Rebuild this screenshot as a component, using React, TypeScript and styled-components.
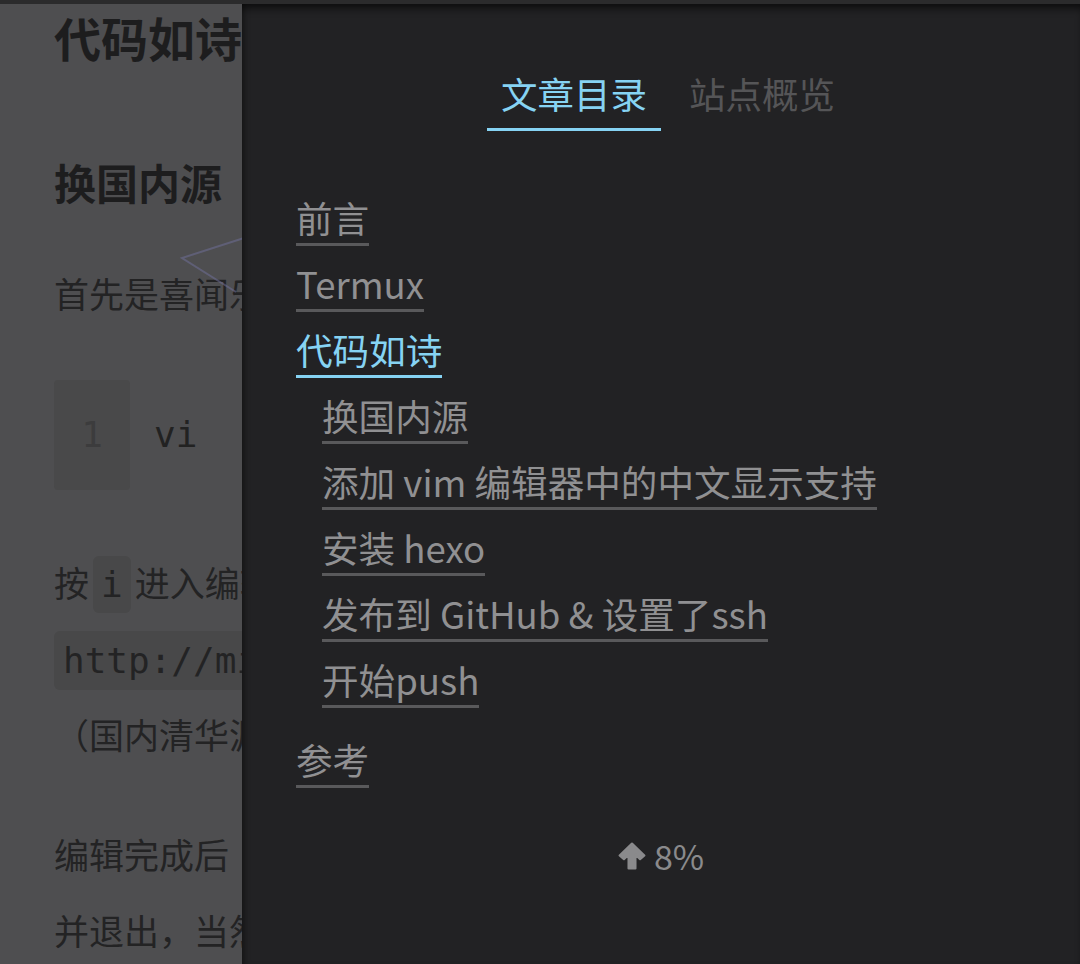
import React from "react";
import styled, { createGlobalStyle } from "styled-components";

const GlobalStyle = createGlobalStyle`
  html, body {
    margin: 0;
    padding: 0;
    background: #4e4e50;
    overflow: hidden;
  }
  body {
    font-family: "Noto Sans CJK SC", "Noto Sans", sans-serif;
  }
`;

type TocItem = {
  title: string;
  active?: boolean;
  children?: TocItem[];
};

const toc: TocItem[] = [
  { title: "前言" },
  { title: "Termux" },
  {
    title: "代码如诗",
    active: true,
    children: [
      { title: "换国内源" },
      { title: "添加 vim 编辑器中的中文显示支持" },
      { title: "安装 hexo" },
      { title: "发布到 GitHub & 设置了ssh" },
      { title: "开始push" },
    ],
  },
  { title: "参考" },
];

const Screen = styled.div`
  position: relative;
  width: 1080px;
  height: 964px;
  overflow: hidden;
  background: #4e4e50;
`;

const TopBar = styled.div`
  height: 4px;
  background: #2b2b2c;
`;

// the part of the post that the sidebar leaves visible
const Article = styled.article`
  width: 242px;
  overflow: hidden;
  box-sizing: border-box;
  padding-left: 54px;
  color: #232324;
  white-space: nowrap;
`;

const Heading = styled.h2<{ $size: number; $top: number }>`
  margin: ${(p) => p.$top}px 0 0;
  font-size: ${(p) => p.$size}px;
  line-height: 1.2;
  font-weight: 700;
  color: #1d1d1e;
`;

const Para = styled.p<{ $top: number }>`
  margin: ${(p) => p.$top}px 0 0;
  font-size: 35px;
  line-height: 76px;
`;

const InlineCode = styled.code<{ $block?: boolean }>`
  font-family: "DejaVu Sans Mono", "Liberation Mono", monospace;
  font-size: 36px;
  line-height: 1;
  background: #484849;
  border-radius: 6px;
  padding: ${(p) => (p.$block ? "9px 9px" : "8px 8px")};
  margin: ${(p) => (p.$block ? "0" : "0 4px")};
`;

const Spacer = styled.span`
  display: inline-block;
  width: 16px;
`;

const CodeBlock = styled.div`
  display: flex;
  margin-top: 49px;
  height: 110px;
  font-family: "DejaVu Sans Mono", "Liberation Mono", monospace;
  font-size: 36px;
`;

const Gutter = styled.div`
  flex: none;
  width: 76px;
  display: flex;
  align-items: center;
  justify-content: center;
  background: #49494a;
  border-radius: 4px;
  color: #3c3c3d;
`;

const CodeLine = styled.div`
  display: flex;
  align-items: center;
  padding-left: 24px;
  white-space: pre;
  color: #222;
`;

const Scribble = styled.svg`
  position: absolute;
  left: 170px;
  top: 230px;
  width: 90px;
  height: 70px;
`;

const Sidebar = styled.aside`
  position: absolute;
  top: 4px;
  right: 0;
  bottom: 0;
  width: 838px;
  background: #222224;
  box-shadow: inset 0 8px 8px -4px rgba(0, 0, 0, 0.65),
    inset 6px 0 6px -4px rgba(0, 0, 0, 0.35);
  display: flex;
  flex-direction: column;
  padding: 66px 54px 0;
  box-sizing: border-box;
`;

const Tabs = styled.div`
  display: flex;
  justify-content: center;
  gap: 14px;
  padding-left: 14px;
`;

const Tab = styled.div<{ $active?: boolean }>`
  padding: 0 14px 10px;
  font-size: 36.5px;
  line-height: 48px;
  color: ${(p) => (p.$active ? "#86d3f3" : "#555557")};
  border-bottom: 3px solid ${(p) => (p.$active ? "#86d3f3" : "transparent")};
`;

const List = styled.ul<{ $nested?: boolean }>`
  list-style: none;
  margin: ${(p) => (p.$nested ? "0 0 14px" : "65px 0 0")};
  padding: 0 0 0 ${(p) => (p.$nested ? 26 : 0)}px;
`;

const Item = styled.li`
  margin: 0;
  line-height: 0;
`;

const Link = styled.a<{ $active?: boolean }>`
  display: inline-block;
  margin-bottom: 16px;
  padding-bottom: 3px;
  font-size: 36.6px;
  line-height: 44px;
  color: ${(p) => (p.$active ? "#86d3f3" : "#909092")};
  border-bottom: 3px solid ${(p) => (p.$active ? "#86d3f3" : "#59595b")};
  text-decoration: none;
  white-space: nowrap;
`;

const Progress = styled.div`
  display: flex;
  align-items: center;
  justify-content: center;
  gap: 8px;
  margin-top: 30px;
  font-size: 34px;
  line-height: 44px;
  color: #8a8a8c;
`;

const ArrowIcon = styled.svg`
  width: 28px;
  height: 28px;
  margin-top: -1px;
`;

const TocList = ({ items, nested }: { items: TocItem[]; nested?: boolean }) => (
  <List $nested={nested}>
    {items.map((item) => (
      <Item key={item.title}>
        <Link $active={item.active}>{item.title}</Link>
        {item.children && <TocList items={item.children} nested />}
      </Item>
    ))}
  </List>
);

export default function App() {
  return (
    <Screen>
      <GlobalStyle />
      <TopBar />
      <Article>
        <Heading $size={47} $top={5}>代码如诗</Heading>
        <Heading $size={42} $top={92}>换国内源</Heading>
        <Para $top={47}>首先是喜闻乐见的换源环节</Para>
        <CodeBlock>
          <Gutter>1</Gutter>
          <CodeLine>{"vi    $PREFIX/etc/apt/sources.list"}</CodeLine>
        </CodeBlock>
        <Para $top={54}>
          按<InlineCode>i</InlineCode>进入编辑模式
          <br />
          <InlineCode $block>http://mirrors.tuna.tsinghua.edu.cn</InlineCode>
          <br />
          （国内清华源）
        </Para>
        <Para $top={44}>
          编辑完成后<Spacer />按 Esc 输入 :wq 保存
          <br />
          并退出，当然也可以用 nano
        </Para>
      </Article>
      <Scribble viewBox="0 0 90 70">
        <polyline
          points="74,8 12,28 66,62"
          fill="none"
          stroke="rgba(110,110,150,0.55)"
          strokeWidth="2"
        />
      </Scribble>
      <Sidebar>
        <Tabs>
          <Tab $active>文章目录</Tab>
          <Tab>站点概览</Tab>
        </Tabs>
        <TocList items={toc} />
        <Progress>
          <ArrowIcon viewBox="0 0 26 26">
            <path
              d="M13 1.5 L24.5 12.5 L20.5 16 L16.2 11.8 V24.5 H9.8 V11.8 L5.5 16 L1.5 12.5 Z"
              fill="currentColor"
              stroke="currentColor"
              strokeWidth="2"
              strokeLinejoin="round"
            />
          </ArrowIcon>
          8%
        </Progress>
      </Sidebar>
    </Screen>
  );
}
